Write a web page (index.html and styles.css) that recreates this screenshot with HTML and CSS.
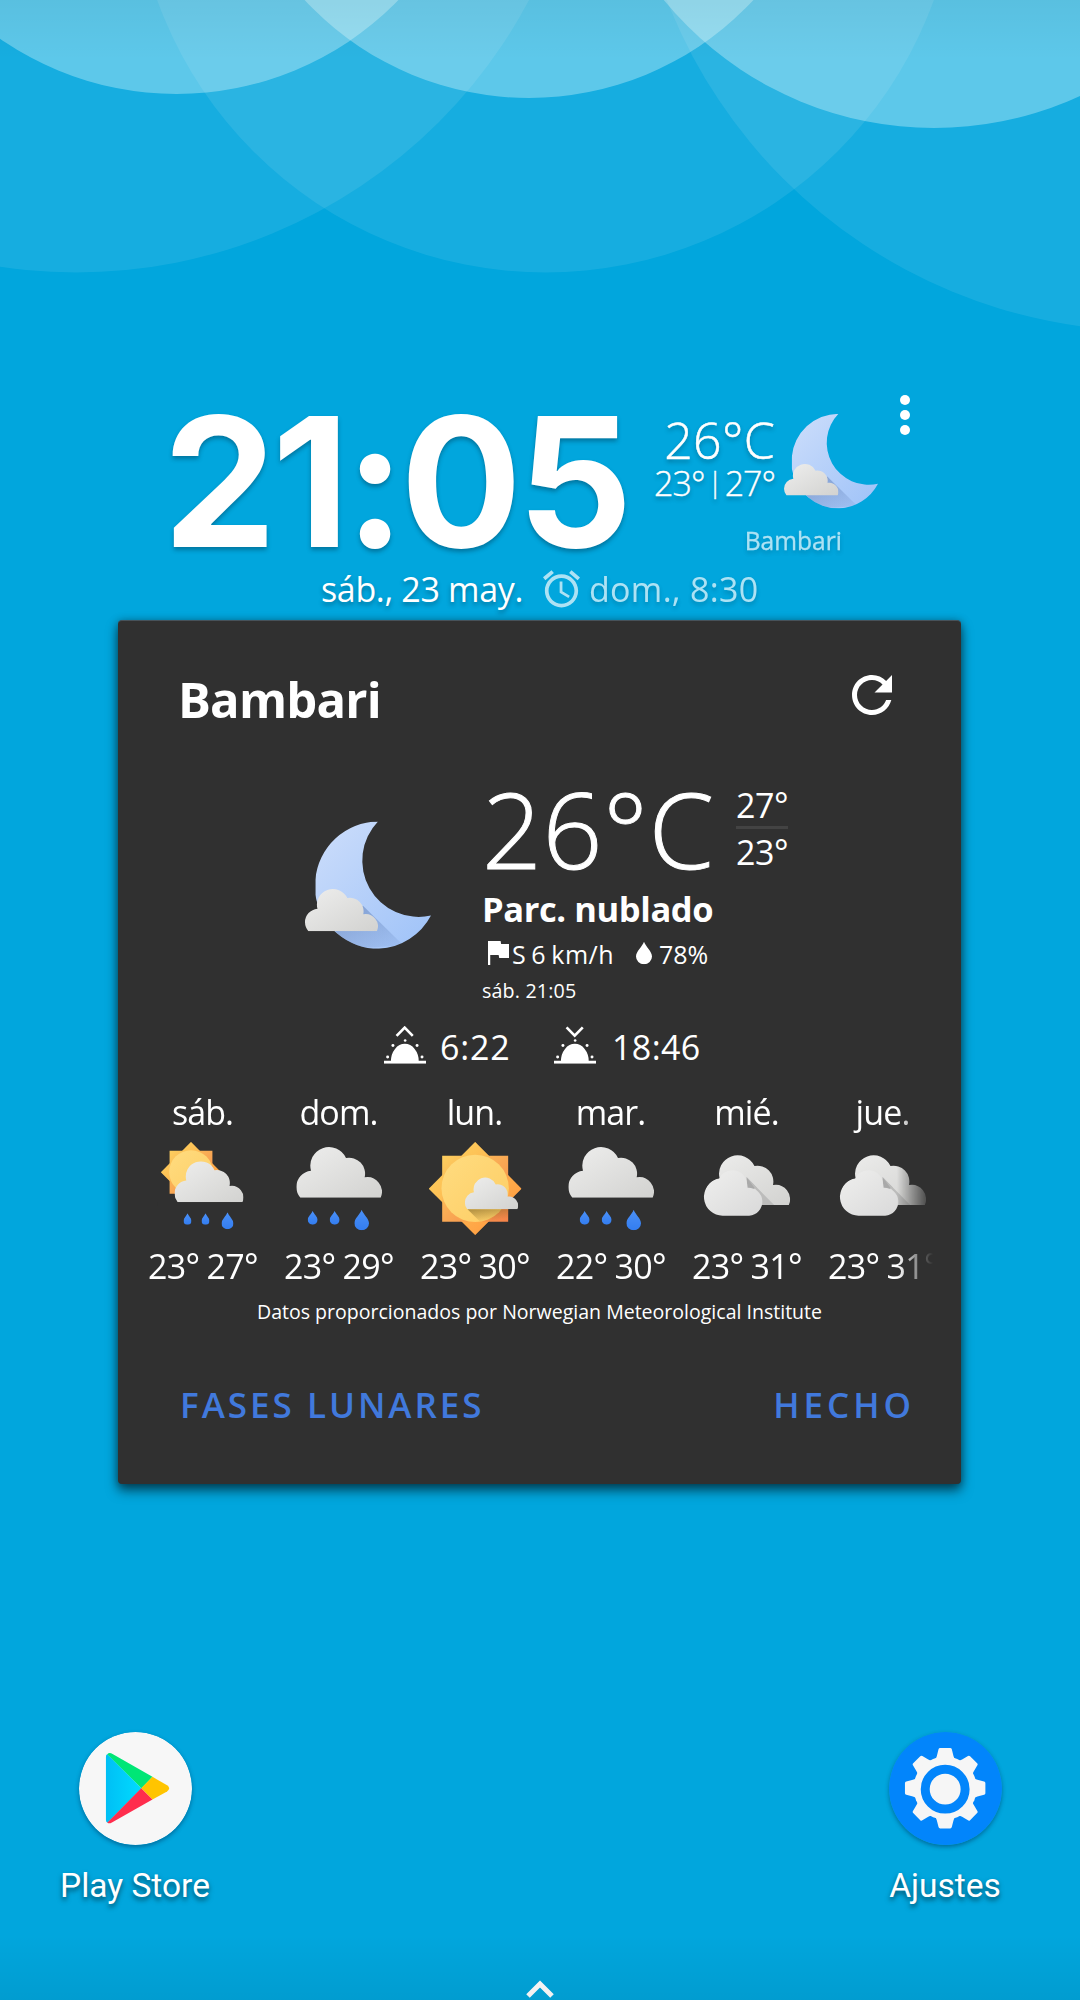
FILE: index.html
```html
<!DOCTYPE html>
<html lang="es">
<head>
<meta charset="utf-8">
<title>Bambari</title>
<link rel="stylesheet" href="styles.css">
</head>
<body>
<svg class="defs" width="0" height="0" aria-hidden="true">
  <defs>
    <linearGradient id="gCloud" x1="0" y1="0" x2="1" y2="1"><stop offset="0" stop-color="#eeeeed"/><stop offset="1" stop-color="#d2d2d0"/></linearGradient>
    <linearGradient id="gCloudFront" x1="0" y1="0" x2="1" y2="1"><stop offset="0" stop-color="#efefee"/><stop offset="1" stop-color="#d9d9d9"/></linearGradient>
    <linearGradient id="gMoon" x1="0" y1="0" x2="1" y2="1"><stop offset="0" stop-color="#cfdffb"/><stop offset="1" stop-color="#9ec2f8"/></linearGradient>
    <linearGradient id="gMoonShade" x1="0" y1="0" x2=".8" y2="1"><stop offset="0" stop-color="#5f7fb8" stop-opacity=".65"/><stop offset="1" stop-color="#5f7fb8" stop-opacity=".12"/></linearGradient>
    <linearGradient id="gSquare" x1="0" y1="0" x2="1" y2="1"><stop offset="0" stop-color="#fdcf5e"/><stop offset="1" stop-color="#f58249"/></linearGradient>
    <linearGradient id="gDiamond" x1="0" y1="0" x2="1" y2="1"><stop offset=".2" stop-color="#fdcb5b"/><stop offset=".8" stop-color="#ff9f43"/></linearGradient>
    <linearGradient id="gDisc" x1="0" y1="0" x2="1" y2="1"><stop offset="0" stop-color="#ffdc80"/><stop offset="1" stop-color="#fdcd64"/></linearGradient>
    <linearGradient id="gShade" x1="0" y1="0" x2=".5" y2="1"><stop offset="0" stop-color="#7a5f20" stop-opacity=".6"/><stop offset="1" stop-color="#7a5f20" stop-opacity="0"/></linearGradient>
    <linearGradient id="gDrop" x1="0" y1="0" x2="0" y2="1"><stop offset="0" stop-color="#4b90f7"/><stop offset="1" stop-color="#337df0"/></linearGradient>
    <linearGradient id="gPlay" x1="0" y1="0" x2="1" y2="0"><stop offset="0" stop-color="#00bff5"/><stop offset="1" stop-color="#00dcff"/></linearGradient>

    <symbol id="cloud" viewBox="499 196 257 156" preserveAspectRatio="none">
      <path fill="url(#gCloud)" d="M511 352A50 50 0 0 1 499 320A49 49 0 0 1 543 271A56 56 0 0 1 648 233A48 48 0 0 1 704 291A44 44 0 0 1 752 352Z"/>
    </symbol>
    <symbol id="drop" viewBox="0 0 30 42" preserveAspectRatio="none">
      <path d="M15 0C18 9 30 18 30 27.5A15 14.5 0 0 1 0 27.5C0 18 12 9 15 0Z"/>
    </symbol>
    <symbol id="sun" viewBox="896 184 278 279">
      <path fill="url(#gDiamond)" d="M1035 184L1174 324L1035 463L896 324Z"/>
      <path fill="url(#gSquare)" d="M936 225H1134V423H936Z"/>
      <path fill="url(#gDiamond)" opacity=".45" d="M1035 184L1174 324L1035 463L896 324Z"/>
      <circle cx="1035" cy="323" r="101" fill="url(#gDisc)"/>
    </symbol>
    <symbol id="night" viewBox="15 64 378 383">
      <clipPath id="moonClip"><path d="M234 65A191 191 0 0 0 46 240V285A193 193 0 0 0 237 447A188 188 0 0 0 393 347A169 169 0 0 1 234 65Z"/></clipPath>
      <g clip-path="url(#moonClip)">
        <path fill="url(#gMoon)" d="M15 64H393V447H15Z"/>
        <path fill="url(#gMoonShade)" d="M189 318L310 436L160 447L105 394Z"/>
      </g>
      <use href="#cloud" x="15" y="264" width="219" height="130"/>
    </symbol>
    <symbol id="rain" viewBox="423 155 408 336">
      <use href="#cloud" x="499" y="196" width="257" height="156"/>
      <g fill="url(#gDrop)">
        <use href="#drop" x="533" y="391" width="30" height="42"/>
        <use href="#drop" x="599" y="391" width="30" height="42"/>
        <use href="#drop" x="673" y="388" width="44" height="62"/>
      </g>
    </symbol>
    <symbol id="cloudy" viewBox="416.500 153 408 336">
      <use href="#cloud" x="495" y="219" width="255" height="153"/>
      <path fill="#a9a9a9" d="M619 288L650 320L622 330Z"/>
      <path fill="#bcbcbb" d="M619 288L702 372H650V330Z"/>
      <path fill="url(#gCloudFront)" d="M549 404A56 56 0 0 1 537 293Q546 270 578 268Q620 272 622 320A42 42 0 0 1 627 404Z"/>
    </symbol>
    <symbol id="halfsun" viewBox="282 845 127 63">
      <path d="M282 899H409V908H282ZM303 900A42 52 0 0 1 387 900Z"/>
    </symbol>
  </defs>
</svg>

<svg class="wallpaper" viewBox="0 0 1080 2000" aria-hidden="true">
  <g fill="#ffffff" fill-opacity=".086">
    <circle cx="76" cy="-240.500" r="513"/>
    <circle cx="545.500" cy="-140.500" r="413"/>
    <circle cx="1150.500" cy="-188" r="519"/>
  </g>
  <g fill="#f0ffff" fill-opacity=".33">
    <circle cx="176.500" cy="-215" r="309"/>
    <circle cx="529" cy="-208" r="306"/>
    <circle cx="934" cy="-221" r="349"/>
  </g>
</svg>

<main class="screen">
  <section class="widget">
    <div class="widget-top">
      <div class="time">21:05</div>
      <div class="now">
        <div class="now-temps">
          <div class="now-temp">26°C</div>
          <div class="now-range"><span>23°</span><span class="bar">|</span><span>27°</span></div>
        </div>
        <svg class="now-icon"><use href="#night"/></svg>
        <div class="now-city">Bambari</div>
      </div>
      <svg class="menu" viewBox="0 0 10 40"><circle cx="5" cy="5" r="5"/><circle cx="5" cy="20" r="5"/><circle cx="5" cy="35" r="5"/></svg>
    </div>
    <div class="widget-date">
      <span class="date">sáb., 23 may.</span>
      <svg class="alarm" viewBox="2 2 20 20"><path d="M22 5.720l-4.600-3.860-1.290 1.530 4.600 3.860L22 5.720zM7.880 3.390L6.600 1.860 2 5.710l1.290 1.530 4.590-3.850zM12.500 8H11v6l4.750 2.850.75-1.230-4-2.370V8zM12 4c-4.970 0-9 4.030-9 9s4.020 9 9 9c4.970 0 9-4.030 9-9s-4.030-9-9-9zm0 16c-3.870 0-7-3.130-7-7s3.130-7 7-7 7 3.130 7 7-3.130 7-7 7z"/></svg>
      <span class="next-alarm">dom., 8:30</span>
    </div>
  </section>

  <section class="card">
    <header class="card-head">
      <h1>Bambari</h1>
      <svg class="refresh" viewBox="0 0 24 24"><path d="M17.650 6.350C16.200 4.900 14.210 4 12 4c-4.420 0-7.990 3.580-7.990 8s3.570 8 7.990 8c3.730 0 6.840-2.550 7.730-6h-2.080c-.82 2.330-3.040 4-5.650 4-3.310 0-6-2.690-6-6s2.690-6 6-6c1.660 0 3.140.69 4.220 1.780L13 11h7V4l-2.350 2.350z"/></svg>
    </header>

    <div class="current">
      <svg class="current-icon"><use href="#night"/></svg>
      <div class="details">
        <div class="temps">
          <span class="big">26°C</span>
          <div class="minmax"><span>27°</span><hr><span>23°</span></div>
        </div>
        <div class="condition">Parc. nublado</div>
        <div class="metrics">
          <svg class="flag" viewBox="5 4 15 17"><path d="M14.400 6L14 4H5v17h1.600v-7h6l.4 2h7V6z"/></svg>
          <span class="wind">S 6 km/h</span>
          <svg class="humid" viewBox="0 0 30 42"><use href="#drop" width="30" height="42"/></svg>
          <span>78%</span>
        </div>
        <div class="stamp">sáb. 21:05</div>
      </div>
    </div>

    <div class="sun-times">
      <svg class="sun-icon" viewBox="282 795 127 113">
        <use href="#halfsun" x="282" y="845" width="127" height="63"/>
        <g><circle cx="346" cy="838" r="4"/><circle cx="309" cy="853" r="4.500"/><circle cx="382" cy="853" r="4.500"/><circle cx="293" cy="888" r="4.500"/><circle cx="397" cy="888" r="4.500"/></g>
        <path class="arrow" d="M320 824L344.500 799L369 824"/>
      </svg>
      <span class="sunrise">6:22</span>
      <svg class="sun-icon" viewBox="282 795 127 113">
        <use href="#halfsun" x="282" y="845" width="127" height="63"/>
        <g><circle cx="346" cy="838" r="4"/><circle cx="309" cy="853" r="4.500"/><circle cx="382" cy="853" r="4.500"/><circle cx="293" cy="888" r="4.500"/><circle cx="397" cy="888" r="4.500"/></g>
        <path class="arrow" d="M320 798L344.500 823L369 798"/>
      </svg>
      <span class="sunset">18:46</span>
    </div>

    <div class="forecast">
      <div class="day">
        <span class="name">sáb.</span>
        <svg viewBox="13.500 155 408 336">
          <use href="#sun" x="91" y="185" width="181" height="181"/>
          <path fill="#303030" d="M80 341H133L138 376H80Z"/>
          <use href="#cloud" x="132" y="240" width="207" height="126"/>
          <path fill="#303030" d="M80 366.500H345V376H80Z"/>
          <g fill="url(#gDrop)">
            <use href="#drop" x="159" y="399" width="24" height="34"/>
            <use href="#drop" x="213" y="399" width="24" height="34"/>
            <use href="#drop" x="273" y="396" width="36" height="51"/>
          </g>
        </svg>
        <span class="range">23° 27°</span>
      </div>
      <div class="day">
        <span class="name">dom.</span>
        <svg><use href="#rain"/></svg>
        <span class="range">23° 29°</span>
      </div>
      <div class="day">
        <span class="name">lun.</span>
        <svg viewBox="830.500 154 408 336">
          <use href="#sun" x="896" y="184" width="278" height="279"/>
          <path fill="url(#gShade)" d="M1012 386H1134V423H1050Z"/>
          <use href="#cloud" x="1004" y="288" width="160" height="98"/>
        </svg>
        <span class="range">23° 30°</span>
      </div>
      <div class="day">
        <span class="name">mar.</span>
        <svg><use href="#rain"/></svg>
        <span class="range">22° 30°</span>
      </div>
      <div class="day">
        <span class="name">mié.</span>
        <svg><use href="#cloudy"/></svg>
        <span class="range">23° 31°</span>
      </div>
      <div class="day">
        <span class="name">jue.</span>
        <svg><use href="#cloudy"/></svg>
        <span class="range">23° 31°</span>
      </div>
    </div>

    <p class="source">Datos proporcionados por Norwegian Meteorological Institute</p>

    <footer class="actions">
      <span class="moon-phases">FASES LUNARES</span>
      <span class="done">HECHO</span>
    </footer>
  </section>

  <nav class="apps">
    <div class="app">
      <svg class="app-icon" viewBox="115 97 340 340">
        <circle cx="285" cy="267" r="170" fill="#f7f7f7"/>
        <path fill="url(#gPlay)" d="M196 172Q196 163 201 164L303 266L201 370Q196 369 196 362Z"/>
        <path fill="#00e676" d="M200 164Q206 157 216 163L336 232L303 266Z"/>
        <path fill="#ffc400" d="M336 232L380 257Q393 266 380 276L336 300L302 266Z"/>
        <path fill="#ff2d4d" d="M302 266L336 300L214 369Q206 374 200 370Z"/>
      </svg>
      <span>Play Store</span>
    </div>
    <div class="app">
      <svg class="app-icon" viewBox="115 95 340 340">
        <circle cx="285" cy="265" r="170" fill="#0285fb"/>
        <g fill="#f6f6f6" transform="translate(284 264)">
          <path id="teeth" d="M-32 -86Q-27 -88 -25 -97L-20 -117Q-19 -121 -15 -121H15Q19 -121 20 -117L25 -97Q27 -88 32 -86L32 86Q27 88 25 97L20 117Q19 121 15 121H-15Q-19 121 -20 117L-25 97Q-27 88 -32 86Z"/>
          <use href="#teeth" transform="rotate(45)"/>
          <use href="#teeth" transform="rotate(90)"/>
          <use href="#teeth" transform="rotate(135)"/>
          <circle r="95"/>
        </g>
        <circle cx="284" cy="267" r="60" fill="#f6f6f6" stroke="#0285fb" stroke-width="27"/>
      </svg>
      <span>Ajustes</span>
    </div>
  </nav>
  <svg class="drawer" viewBox="0 0 28 19"><path d="M2 16L14 4L26 16"/></svg>
</main>
</body>
</html>
```
FILE: styles.css
```css
* { box-sizing: border-box; }

body {
  margin: 0;
  width: 1080px;
  height: 2000px;
  overflow: hidden;
  position: relative;
  background: #01a6dd;
  color: #fff;
  font-family: "Open Sans", "Noto Sans", sans-serif;
}

svg { display: block; flex: none; }
.defs { position: absolute; }

/* Wallpaper with the status and navigation bar scrims */
.wallpaper {
  position: absolute;
  left: 0;
  top: 0;
  width: 1080px;
  height: 2000px;
}
body::after {
  content: "";
  position: absolute;
  inset: 0;
  pointer-events: none;
  background: linear-gradient(rgba(0,0,0,.045), rgba(0,0,0,0) 60px, rgba(0,0,0,0) 1935px, rgba(0,0,0,.06));
}

.screen {
  position: relative;
  height: 2000px;
  display: flex;
  flex-direction: column;
}

/* Clock widget */
.widget {
  height: 620px;
  padding-top: 392px;
  fill: #fff;
  text-shadow: 0 3px 4px rgba(0,40,60,.38);
}
.widget-top {
  display: flex;
  height: 175px;
  padding-left: 163px;
}
.time {
  width: 475px;
  font: 700 180px/180px Inter, sans-serif;
  letter-spacing: -4.5px;
  white-space: nowrap;
}
.now {
  width: 242px;
  height: 150px;
  margin-top: 21px;
  display: grid;
  grid-template: 111px 34px / 138px 104px;
}
.now-temps {
  display: flex;
  flex-direction: column;
  align-items: flex-end;
  padding-top: 2px;
  font-weight: 300;
}
.now-temp {
  padding-right: 1px;
  font-size: 50px;
  line-height: 50px;
  letter-spacing: .3px;
  -webkit-text-stroke: .5px #fff;
}
.now-range {
  display: flex;
  gap: 3px;
  padding-right: 1px;
  font-size: 34px;
  line-height: 36px;
  letter-spacing: -1px;
  -webkit-text-stroke: .4px #fff;
}
.now-range .bar { font-size: 28px; line-height: 33px; }
.now-icon { width: 94px; height: 96px; margin-left: 8px; }
.now-city {
  grid-column: 1 / 3;
  padding-right: 38px;
  text-align: right;
  font-size: 24.6px;
  line-height: 34px;
  -webkit-text-stroke: .3px #fff;
  opacity: .68;
}
.menu { width: 10px; height: 40px; margin: 3px 0 0 20px; }
.widget-date {
  display: flex;
  padding-left: 321px;
  font-size: 34px;
  line-height: 44px;
}
.date { width: 222px; letter-spacing: -.35px; }
.alarm { width: 37px; height: 38px; margin-top: 3px; opacity: .68; }
.next-alarm { margin-left: 9px; letter-spacing: .3px; opacity: .68; }

/* Weather card */
.card {
  width: 843px;
  height: 864px;
  margin: 0 118px;
  padding-top: 48px;
  background: #303030;
  border-top: 1px solid #47525a;
  border-radius: 4px;
  fill: #fff;
  box-shadow: 0 7px 12px rgba(0,0,0,.5), 0 1px 9px rgba(0,0,0,.35);
}
.card-head {
  display: flex;
  justify-content: space-between;
  height: 60px;
  padding: 0 59px 0 60px;
}
h1 {
  margin: 0;
  font-size: 49px;
  line-height: 61px;
  font-weight: 700;
  letter-spacing: -.8px;
}
.refresh { width: 60px; height: 60px; margin-top: -4px; }

.current {
  display: flex;
  height: 296px;
  padding: 46px 0 0 187px;
}
.current-icon { width: 126px; height: 128px; margin-top: 46px; }
.details { margin-left: 51px; }
.temps { display: flex; height: 106px; }
.big {
  width: 254px;
  font-size: 105px;
  line-height: 107px;
  font-weight: 300;
  letter-spacing: .6px;
  -webkit-text-stroke: 1px #fff;
}
.minmax {
  width: 52px;
  margin-top: 8px;
  font-size: 34px;
  line-height: 44px;
  letter-spacing: -.5px;
}
.minmax span { display: block; }
.minmax hr { height: 3px; margin: -1px 0 1px; border: 0; background: #434343; }
.condition {
  margin-top: 3px;
  font-size: 34.5px;
  line-height: 50px;
  font-weight: 700;
  letter-spacing: -.4px;
}
.metrics {
  display: flex;
  padding-left: 6px;
  font-size: 25px;
  line-height: 40px;
}
.flag { width: 21px; height: 24px; margin: 7px 3px 0 0; }
.wind { width: 125px; letter-spacing: .55px; word-spacing: -2px; }
.humid { width: 16px; height: 24px; margin: 7px 7px 0 -1px; }
.stamp { font-size: 19.7px; line-height: 34px; letter-spacing: .15px; }

.sun-times {
  display: flex;
  padding-left: 266px;
  font-size: 34px;
  line-height: 44px;
  letter-spacing: .8px;
}
.sun-icon { width: 42px; height: 38px; margin-top: 1px; }
.arrow { fill: none; stroke: #fff; stroke-width: 8; }
.sunrise { width: 114px; margin-left: 14px; }
.sunset { margin-left: 16px; letter-spacing: .4px; }

.forecast {
  display: flex;
  width: 816px;
  margin: 23px 0 0 16.5px;
  mask-image: linear-gradient(to right, #000 762px, transparent 798px);
}
.day {
  flex: none;
  width: 136px;
  text-align: center;
  font-size: 34px;
}
.day span { display: block; }
.day svg { width: 136px; height: 112px; }
.name { line-height: 40px; letter-spacing: -.9px; }
.range { padding-left: 1px; line-height: 44px; letter-spacing: -.65px; word-spacing: -1.2px; }

.source {
  margin: 9px 0 0;
  text-align: center;
  font-size: 19.55px;
  line-height: 30px;
}
.actions {
  display: flex;
  justify-content: space-between;
  padding: 53px 48px 0 61px;
  color: #4179dc;
  font-size: 35px;
  line-height: 50px;
  font-weight: 650;
}
.moon-phases { letter-spacing: 3px; padding-left: 1px; }
.done { letter-spacing: 4px; margin-right: -2px; }

/* Launcher */
.apps {
  display: flex;
  justify-content: space-between;
  padding-top: 248px;
}
.app {
  width: 270px;
  display: flex;
  flex-direction: column;
  align-items: center;
  gap: 20px;
  font: 33.5px/42px Roboto, sans-serif;
  text-shadow: 0 3px 5px rgba(0,0,0,.55);
}
.app-icon {
  width: 113px;
  height: 113px;
  border-radius: 50%;
  box-shadow: 0 2px 4px rgba(0,40,80,.45);
}
.drawer {
  width: 28px;
  height: 19px;
  margin: 73px auto 0;
  fill: none;
  stroke: #fff;
  stroke-width: 5;
}
```
